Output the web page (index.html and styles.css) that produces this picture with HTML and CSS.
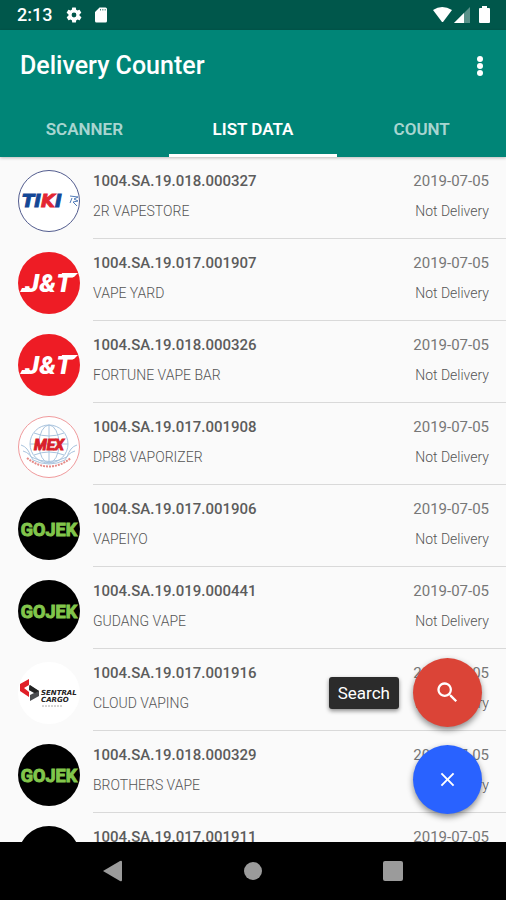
FILE: index.html
```html
<!DOCTYPE html>
<html lang="en">
<head>
<meta charset="utf-8">
<meta name="viewport" content="width=device-width, initial-scale=1">
<title>Delivery Counter</title>
<link rel="stylesheet" href="styles.css">
</head>
<body>
<svg class="defs" aria-hidden="true">
  <symbol id="tiki" viewBox="0 0 62 62">
    <circle cx="31" cy="31" r="30.5" fill="#fff" stroke="#525c8e"/>
    <text class="logo-tiki" x="4" y="37" fill="#144795" stroke="#144795">TI<tspan fill="#e32632" stroke="#e32632">K</tspan>I</text>
    <path d="M52 26l8 1-4 2 4 2-5 1 4 4M54 28l-2 5" fill="none" stroke="#527cb8"/>
  </symbol>
  <symbol id="jnt" viewBox="0 0 62 62">
    <circle cx="31" cy="31" r="31" fill="#ee1c25"/>
    <text class="logo-jnt" x="7" y="40" fill="#fff">J&amp;T</text>
    <path d="M4 36h8l-1 4H2zM44 21h16l-4 4H43z" fill="#fff"/>
  </symbol>
  <symbol id="mex" viewBox="0 0 62 62">
    <circle cx="31" cy="31" r="30.5" fill="#fff" stroke="#f09a9c"/>
    <g fill="none" stroke="#a9c4de">
      <ellipse cx="31" cy="28" rx="19" ry="19"/>
      <ellipse cx="31" cy="28" rx="10" ry="19"/>
      <path d="M31 9v38M16 17q15 6 30 0M12 28h38M16 39q15-6 30 0M3 29q7 2 10 12 18 9 36 0 3-10 10-12M5 35q7 2 10 9 16 8 32 0 3-7 10-9"/>
    </g>
    <path d="M9 42q22 17 44 0" fill="none" stroke="#e58b88" stroke-width="2" stroke-dasharray="2 1"/>
    <text class="logo-mex" x="31" y="34" text-anchor="middle" fill="#d91f2b" stroke="#d91f2b">MEX</text>
  </symbol>
  <symbol id="gojek" viewBox="0 0 62 62">
    <circle cx="31" cy="31" r="31" fill="#000"/>
    <text class="logo-gojek" x="31" y="38" text-anchor="middle" fill="#82c54b" stroke="#82c54b">GOJEK</text>
  </symbol>
  <symbol id="sentral" viewBox="0 0 62 62">
    <circle cx="31" cy="31" r="31" fill="#fff"/>
    <path d="M11 17v6l-5 3 5 4v5l-9-6v-7z" fill="#e01f27"/>
    <path d="M11 23l10 6v5l-9 5v-6l4-2-5-3z" fill="#4b4d50"/>
    <path d="M12 23l9 6-4 2-6-3z" fill="#222"/>
    <text class="logo-sentral" x="23" y="33" fill="#222">SENTRAL</text>
    <text class="logo-sentral" x="23" y="40" fill="#222">CARGO</text>
    <path d="M24 44h20" stroke="#aaa" stroke-dasharray="2 1"/>
  </symbol>
</svg>

<div class="status">
  <span class="clock">2:13</span>
  <svg class="status-icon" viewBox="0 0 24 24"><path d="M19.4 13a7 7 0 0 0 0-2l2.1-1.6a.5.5 0 0 0 .1-.6l-2-3.5a.5.5 0 0 0-.6-.2l-2.5 1a7.300 7.300 0 0 0-1.700-1L14.500 2.400A.5.5 0 0 0 14 2h-4a.5.5 0 0 0-.5.4l-.4 2.700a7.700 7.700 0 0 0-1.700 1l-2.500-1a.5.5 0 0 0-.6.2l-2 3.500a.5.5 0 0 0 .1.600L4.600 11a7 7 0 0 0 0 2l-2.100 1.600a.5.5 0 0 0-.1.600l2 3.500c.1.200.4.300.6.200l2.500-1c.5.400 1.100.7 1.700 1l.4 2.700c0 .2.200.4.500.4h4c.2 0 .5-.2.500-.4l.4-2.700a7.300 7.300 0 0 0 1.700-1l2.500 1c.2.100.5 0 .6-.2l2-3.500a.5.5 0 0 0-.1-.6zM12 15.200a3.200 3.200 0 1 1 0-6.400 3.200 3.200 0 0 1 0 6.400z"/></svg>
  <svg class="status-icon" viewBox="0 0 24 24"><path d="M18 2h-8L4 8v12a2 2 0 0 0 2 2h12a2 2 0 0 0 2-2V4a2 2 0 0 0-2-2zm-6 4h-1V4h1zm3 0h-1V4h1zm3 0h-1V4h1z"/></svg>
  <svg class="signals" viewBox="0 0 60 18"><path d="M1 4Q10-2 20 4L11 16h-1z"/><path d="M22 17L38 1v16z" opacity=".35"/><path d="M22 17L32 7v10z"/><path d="M48 2h2V0h5v2h2q1 0 1 1v13q0 1-1 1h-9q-1 0-1-1V3q0-1 1-1z"/></svg>
</div>

<header class="appbar">
  <div class="titlebar">
    <h1>Delivery Counter</h1>
    <button class="more" aria-label="More options"><svg viewBox="0 0 6 22"><circle cx="3" cy="4" r="3"/><circle cx="3" cy="11" r="3"/><circle cx="3" cy="18" r="3"/></svg></button>
  </div>
  <nav class="tabs">
    <a href="#scanner">SCANNER</a>
    <a href="#list" class="active" aria-current="page">LIST DATA</a>
    <a href="#count">COUNT</a>
  </nav>
</header>

<main>
  <ul class="list" id="list">
    <li><svg class="avatar"><use href="#tiki"/></svg><div class="item"><div class="line"><b>1004.SA.19.018.000327</b><time>2019-07-05</time></div><div class="line sub"><span>2R VAPESTORE</span><span>Not Delivery</span></div></div></li>
    <li><svg class="avatar"><use href="#jnt"/></svg><div class="item"><div class="line"><b>1004.SA.19.017.001907</b><time>2019-07-05</time></div><div class="line sub"><span>VAPE YARD</span><span>Not Delivery</span></div></div></li>
    <li><svg class="avatar"><use href="#jnt"/></svg><div class="item"><div class="line"><b>1004.SA.19.018.000326</b><time>2019-07-05</time></div><div class="line sub"><span>FORTUNE VAPE BAR</span><span>Not Delivery</span></div></div></li>
    <li><svg class="avatar"><use href="#mex"/></svg><div class="item"><div class="line"><b>1004.SA.19.017.001908</b><time>2019-07-05</time></div><div class="line sub"><span>DP88 VAPORIZER</span><span>Not Delivery</span></div></div></li>
    <li><svg class="avatar"><use href="#gojek"/></svg><div class="item"><div class="line"><b>1004.SA.19.017.001906</b><time>2019-07-05</time></div><div class="line sub"><span>VAPEIYO</span><span>Not Delivery</span></div></div></li>
    <li><svg class="avatar"><use href="#gojek"/></svg><div class="item"><div class="line"><b>1004.SA.19.019.000441</b><time>2019-07-05</time></div><div class="line sub"><span>GUDANG VAPE</span><span>Not Delivery</span></div></div></li>
    <li><svg class="avatar"><use href="#sentral"/></svg><div class="item"><div class="line"><b>1004.SA.19.017.001916</b><time>2019-07-05</time></div><div class="line sub"><span>CLOUD VAPING</span><span>Not Delivery</span></div></div></li>
    <li><svg class="avatar"><use href="#gojek"/></svg><div class="item"><div class="line"><b>1004.SA.19.018.000329</b><time>2019-07-05</time></div><div class="line sub"><span>BROTHERS VAPE</span><span>Not Delivery</span></div></div></li>
    <li><svg class="avatar" viewBox="0 0 62 62"><circle cx="31" cy="31" r="31"/></svg><div class="item"><div class="line"><b>1004.SA.19.017.001911</b><time>2019-07-05</time></div></div></li>
  </ul>
  <div class="actions">
    <div class="action">
      <label class="tip" for="search">Search</label>
      <button class="fab red" id="search"><svg viewBox="0 0 24 24"><path d="M15.500 14h-.8l-.3-.3A6.500 6.500 0 1 0 13.700 14.400l.3.300v.8l5 5 1.500-1.500zm-6 0a4.500 4.500 0 1 1 0-9 4.500 4.500 0 0 1 0 9z"/></svg></button>
    </div>
    <button class="fab blue" aria-label="Close"><svg viewBox="0 0 24 24"><path d="M18 7.200L16.800 6 12 10.800 7.200 6 6 7.200l4.800 4.800L6 16.800 7.200 18l4.800-4.800 4.800 4.800 1.200-1.200-4.800-4.800z"/></svg></button>
  </div>
</main>

<footer class="navbar">
  <button aria-label="Back"><svg viewBox="0 0 20 22"><path d="M0 11L17 1q2-1 2 1v18q0 2-2 1z"/></svg></button>
  <button aria-label="Home"><svg viewBox="0 0 20 22"><circle cx="10" cy="11" r="9"/></svg></button>
  <button aria-label="Recent apps"><svg viewBox="0 0 20 22"><rect y="1" width="20" height="20" rx="2"/></svg></button>
</footer>
</body>
</html>
```
FILE: styles.css
```css
* { box-sizing: border-box; }

body {
  margin: 0;
  height: 100vh;
  display: flex;
  flex-direction: column;
  overflow: hidden;
  background: #fafafa;
  font-family: Roboto, "Liberation Sans", sans-serif;
}

button {
  padding: 0;
  border: 0;
  background: none;
}

svg { display: block; }

.defs { display: none; }

.status {
  flex: none;
  display: flex;
  align-items: center;
  height: 30px;
  padding: 0 16px 0 17px;
  background: #00574b;
  color: #fff;
}

.status svg { fill: #fff; }

.clock {
  margin-right: 13px;
  font-size: 18px;
  font-weight: 500;
  line-height: 20px;
}

.status-icon {
  width: 18px;
  height: 18px;
  margin-right: 9px;
}

.signals {
  width: 60px;
  height: 18px;
  margin-left: auto;
  margin-right: -2px;
}

.appbar {
  flex: none;
  position: relative;
  background: #008577;
  color: #fff;
  box-shadow: 0 1px 3px rgba(0, 0, 0, 0.25);
}

.titlebar {
  display: flex;
  align-items: center;
  justify-content: space-between;
  height: 71px;
  padding: 0 23px 0 20px;
}

h1 {
  margin: 0;
  font-size: 25px;
  font-weight: 500;
  line-height: 30px;
}

.more svg {
  width: 6px;
  height: 22px;
  fill: #fff;
}

.tabs { display: flex; }

.tabs a {
  flex: 1;
  height: 56px;
  border-bottom: 3px solid transparent;
  color: rgba(255, 255, 255, 0.68);
  font-size: 17px;
  font-weight: 600;
  line-height: 56px;
  text-align: center;
  text-decoration: none;
}

.tabs .active {
  border-color: #fff;
  color: #fff;
}

main {
  flex: 1;
  min-height: 0;
  position: relative;
}

.list {
  height: 100%;
  margin: 0;
  padding: 0;
  overflow: hidden;
  list-style: none;
}

.list li {
  display: flex;
  gap: 13px;
  height: 82px;
  padding-left: 18px;
}

.avatar {
  flex: none;
  width: 62px;
  height: 62px;
  margin-top: 13px;
}

.item {
  flex: 1;
  display: flex;
  flex-direction: column;
  gap: 10px;
  padding: 14px 17px 0 0;
  border-bottom: 1px solid #d9d9d9;
}

.line {
  display: flex;
  justify-content: space-between;
  color: #777;
  font-size: 15px;
  line-height: 20px;
}

.line b {
  color: #5c5c5c;
  font-weight: 500;
}

.sub {
  color: #555;
  font-size: 14px;
  font-weight: 300;
}

.actions {
  position: absolute;
  right: 24px;
  bottom: 28px;
  display: flex;
  flex-direction: column;
  align-items: flex-end;
  gap: 18px;
}

.action {
  display: flex;
  align-items: center;
  gap: 14px;
}

.tip {
  padding: 0 9px;
  border-radius: 3px;
  background: #2b2b2b;
  box-shadow: 0 2px 4px rgba(0, 0, 0, 0.45);
  color: #fff;
  font-size: 17px;
  line-height: 32px;
}

.fab {
  display: grid;
  place-items: center;
  width: 69px;
  height: 69px;
  border-radius: 50%;
  box-shadow: 0 3px 6px rgba(0, 0, 0, 0.45);
}

.fab svg {
  width: 27px;
  height: 27px;
  fill: #fff;
}

.red { background: #db4437; }
.blue { background: #2962ff; }

.navbar {
  flex: none;
  display: flex;
  justify-content: center;
  gap: 120px;
  height: 58px;
  background: #000;
}

.navbar svg {
  width: 20px;
  height: 22px;
  fill: #9b9b9b;
}

.logo-tiki {
  font: italic bold 18px "DejaVu Sans", sans-serif;
}

.logo-jnt {
  font: italic 900 26px Roboto, sans-serif;
}

.logo-mex {
  font: italic bold 15px Roboto, sans-serif;
}

.logo-gojek {
  font: bold 18px Roboto, sans-serif;
}

.logo-sentral {
  font: italic bold 7px "DejaVu Sans", sans-serif;
}
```
